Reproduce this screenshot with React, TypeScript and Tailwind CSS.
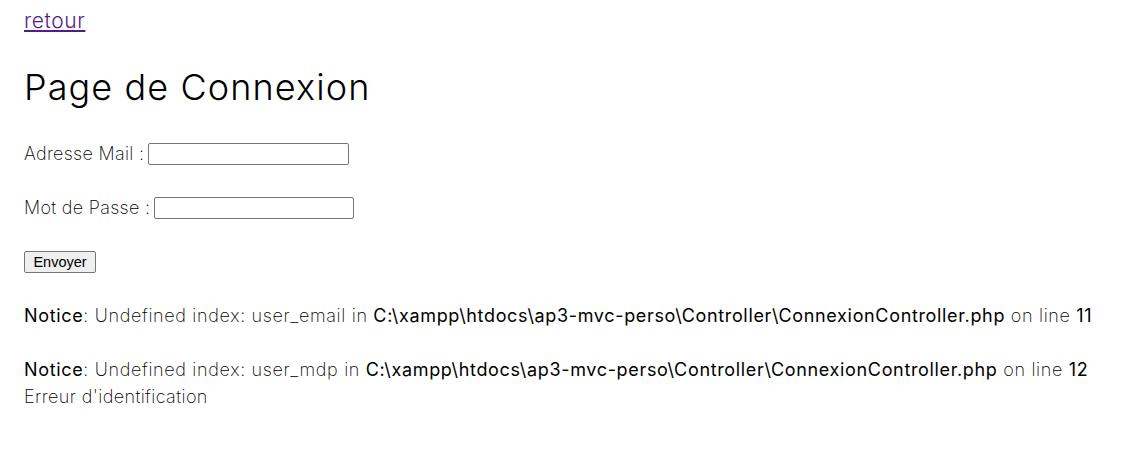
export default function App() {
  return (
    <div className="min-h-[449px] bg-white px-6 pt-[6px] font-['Inter',sans-serif] font-extralight text-[18px] leading-[27px] tracking-[0.66px] text-black">
      <a href="#" className="text-[21px] leading-[30px] tracking-[0.6px] font-light text-[#551a8b] underline">retour</a>
      <h1 className="mt-[29px] text-[36px] leading-[44px] font-light tracking-[1.1px]">Page de Connexion</h1>
      <form className="mt-[31px]">
        <div className="flex items-center h-[27px]">
          <span className="tracking-[0.3px]">Adresse Mail :</span>
          <input type="text" className="ml-[4px] w-[201px] h-[22px] border border-[#767676] rounded-[2px] bg-white" />
        </div>
        <div className="h-[27px]" />
        <div className="flex items-center h-[27px]">
          <span className="tracking-[0.3px]">Mot de Passe :</span>
          <input type="password" className="ml-[4px] w-[200px] h-[22px] border border-[#767676] rounded-[2px] bg-white" />
        </div>
        <div className="h-[27px]" />
        <div className="flex items-center h-[27px]">
          <button type="button" className="h-[22px] w-[72px] border border-[#767676] rounded-[2px] bg-[#efefef] font-['Liberation_Sans',sans-serif] font-normal tracking-normal text-[14.5px] leading-[16px] text-black">Envoyer</button>
        </div>
      </form>
      <div>
        <div className="h-[27px]" />
        <div className="whitespace-nowrap"><b className="font-normal">Notice</b>: Undefined index: user_email in <b className="font-normal">C:\xampp\htdocs\ap3-mvc-perso\Controller\ConnexionController.php</b> on line <b className="font-normal">11</b></div>
        <div className="h-[27px]" />
        <div className="whitespace-nowrap"><b className="font-normal">Notice</b>: Undefined index: user_mdp in <b className="font-normal">C:\xampp\htdocs\ap3-mvc-perso\Controller\ConnexionController.php</b> on line <b className="font-normal">12</b></div>
        <div className="tracking-[0.4px]">Erreur d'identification</div>
      </div>
    </div>
  );
}
